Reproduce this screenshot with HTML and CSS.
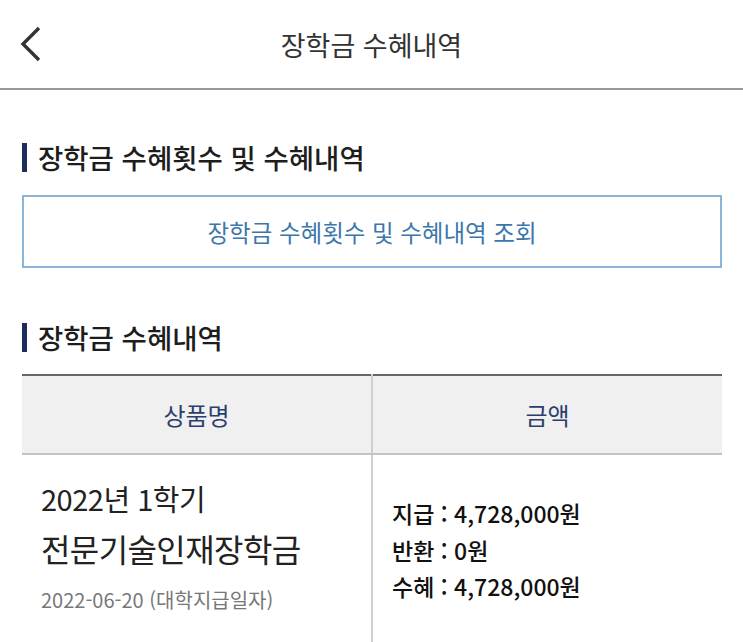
FILE: index.html
```html
<!DOCTYPE html>
<html lang="ko">
<head>
    <meta charset="UTF-8">
    <title>장학금 수혜내역</title>
    <link rel="stylesheet" href="styles.css">
</head>
<body>
    <!-- 상단 헤더 -->
    <header class="top-bar">
        <a class="back-btn" href="#" aria-label="뒤로">
            <svg width="22" height="36" viewBox="0 0 22 36">
                <polyline points="19,2 3,18 19,34" fill="none" stroke="#333" stroke-width="3.4" stroke-linejoin="miter"/>
            </svg>
        </a>
        <h1 class="top-title">장학금 수혜내역</h1>
    </header>

    <main class="content">
        <!-- 수혜횟수 조회 -->
        <h2 class="section-title"><span class="title-bar"></span>장학금 수혜횟수 및 수혜내역</h2>
        <button class="lookup-btn" type="button">장학금 수혜횟수 및 수혜내역 조회</button>

        <!-- 수혜내역 목록 -->
        <h2 class="section-title second"><span class="title-bar"></span>장학금 수혜내역</h2>
        <table class="history-table">
            <thead>
                <tr>
                    <th>상품명</th>
                    <th>금액</th>
                </tr>
            </thead>
            <tbody>
                <tr>
                    <td class="product-cell">
                        <div class="term">2022년 1학기</div>
                        <div class="product-name">전문기술인재장학금</div>
                        <div class="pay-date">2022-06-20 (대학지급일자)</div>
                    </td>
                    <td class="amount-cell">
                        <div>지급 : 4,728,000원</div>
                        <div>반환 : 0원</div>
                        <div>수혜 : 4,728,000원</div>
                    </td>
                </tr>
            </tbody>
        </table>
    </main>
</body>
</html>
```

FILE: styles.css
```css
body {
    margin: 0;
    background-color: #fff;
    font-family: "Noto Sans CJK KR", "Noto Sans", sans-serif;
    color: #222;
}

.top-bar {
    position: relative;
    height: 88px;
    display: flex;
    align-items: center;
    justify-content: center;
    border-bottom: 2px solid #999;
}

.back-btn {
    position: absolute;
    left: 20px;
    top: 26px;
    display: block;
    line-height: 0;
}

.top-title {
    margin: 0;
    font-size: 27px;
    font-weight: 400;
    color: #333;
}

.content {
    padding: 52px 21px 0 22px;
}

.section-title {
    display: flex;
    align-items: center;
    gap: 11px;
    margin: 0;
    height: 30px;
    font-size: 27.5px;
    line-height: 30px;
    font-weight: 500;
    color: #1d1d1d;
}

.section-title.second {
    margin-top: 54px;
}

.title-bar {
    display: block;
    width: 5px;
    height: 29px;
    background-color: #1b2d5b;
}

.lookup-btn {
    display: block;
    width: 100%;
    height: 73px;
    margin-top: 23px;
    background-color: #fff;
    border: 2px solid #8db5d9;
    font-family: inherit;
    font-size: 23.5px;
    color: #3c77ab;
    cursor: pointer;
}

.history-table {
    width: 100%;
    margin-top: 22px;
    border-collapse: collapse;
    table-layout: fixed;
    border-top: 2px solid #666;
}

.history-table th {
    height: 77px;
    padding: 0;
    background-color: #f0f0f0;
    border-bottom: 2px solid #c4c4c4;
    font-size: 24px;
    font-weight: 400;
    color: #2b3f6c;
}

.history-table th:first-child,
.history-table td:first-child {
    border-right: 2px solid #cfcfcf;
}

.history-table td {
    height: 190px;
    padding: 0 0 0 19px;
    vertical-align: middle;
}

.term {
    font-size: 29px;
    line-height: 44px;
    letter-spacing: -0.5px;
    color: #222;
}

.product-name {
    font-size: 32px;
    line-height: 56px;
    letter-spacing: -0.6px;
    color: #222;
}

.pay-date {
    font-size: 20px;
    line-height: 48px;
    color: #777;
}

.amount-cell div {
    font-size: 23px;
    line-height: 36.5px;
    font-weight: 500;
    color: #111;
}
```
